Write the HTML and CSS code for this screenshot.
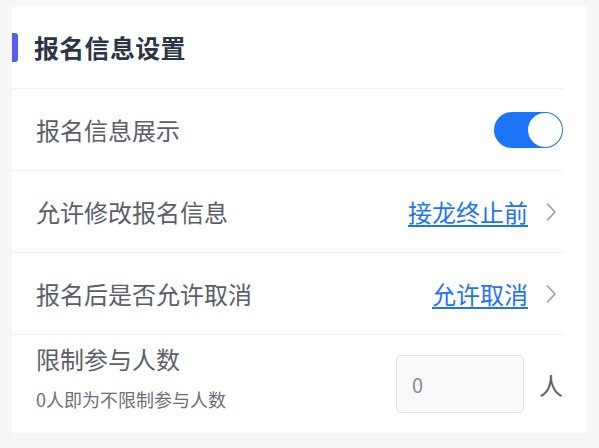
FILE: index.html
```html
<!DOCTYPE html>
<html lang="zh">
<head>
<meta charset="utf-8">
<link rel="stylesheet" href="styles.css">
</head>
<body>
<div class="card">
  <div class="header">
    <span class="bar"></span>
    <h2 class="title">报名信息设置</h2>
  </div>
  <div class="row">
    <span class="label">报名信息展示</span>
    <span class="switch"><span class="knob"></span></span>
  </div>
  <div class="row">
    <span class="label">允许修改报名信息</span>
    <span class="value"><a class="link">接龙终止前</a>
      <svg class="chev" width="12" height="20" viewBox="0 0 12 20"><path d="M2 1.5 L10 10 L2 18.5" fill="none" stroke="#9aa0ab" stroke-width="1.6"/></svg>
    </span>
  </div>
  <div class="row">
    <span class="label">报名后是否允许取消</span>
    <span class="value"><a class="link">允许取消</a>
      <svg class="chev" width="12" height="20" viewBox="0 0 12 20"><path d="M2 1.5 L10 10 L2 18.5" fill="none" stroke="#9aa0ab" stroke-width="1.6"/></svg>
    </span>
  </div>
  <div class="row last">
    <div class="labels">
      <span class="label">限制参与人数</span>
      <span class="hint">0人即为不限制参与人数</span>
    </div>
    <div class="value">
      <div class="input">0</div>
      <span class="unit">人</span>
    </div>
  </div>
</div>
</body>
</html>
```

FILE: styles.css
```css
* { box-sizing: border-box; }
body {
  margin: 0;
  background: #f7f7f7;
  font-family: "Noto Sans CJK SC", "Noto Sans", sans-serif;
}
.card {
  margin: 6px 12px 0 12px;
  width: 575px;
  height: 427px;
  background: #fff;
}
.header {
  position: relative;
  height: 83px;
  display: flex;
  align-items: center;
  padding-left: 22px;
  margin-right: 24px;
  border-bottom: 1px solid #f0f0f2;
}
.bar {
  position: absolute;
  left: 0;
  top: 27px;
  width: 6px;
  height: 29px;
  background: #5a5cf2;
  border-radius: 0 3px 3px 0;
}
.title {
  margin: 0;
  font-size: 25px;
  font-weight: 700;
  color: #2c3447;
  letter-spacing: 0.3px;
}
.row {
  height: 82px;
  margin-right: 24px;
  padding-left: 24px;
  display: flex;
  align-items: center;
  justify-content: space-between;
  border-bottom: 1px solid #f0f0f2;
}
.row.last {
  border-bottom: none;
  height: 98px;
  align-items: flex-start;
  padding-top: 6px;
}
.label {
  font-size: 24px;
  color: #5a5e69;
}
.labels {
  display: flex;
  flex-direction: column;
}
.hint {
  font-size: 18px;
  color: #6b6f7a;
  margin-top: 10px;
}
.value {
  display: flex;
  align-items: center;
}
.link {
  font-size: 24px;
  color: #1d74f5;
  text-decoration: underline;
  text-underline-offset: 3px;
}
.chev {
  margin-left: 17px;
  margin-right: 6px;
}
.switch {
  width: 69px;
  height: 36px;
  border-radius: 18px;
  background: #1b73f7;
  display: flex;
  align-items: center;
  justify-content: flex-end;
  padding: 1px;
}
.knob {
  width: 34px;
  height: 34px;
  border-radius: 50%;
  background: #fff;
}
.row.last .value {
  margin-top: 14px;
}
.input {
  width: 128px;
  height: 58px;
  background: #f8f9fb;
  border: 1px solid #e1e4e9;
  border-radius: 5px;
  padding-left: 15px;
  display: flex;
  align-items: center;
  font-size: 20px;
  color: #8a8a8a;
}
.unit {
  margin-left: 15px;
  font-size: 24px;
  color: #5a5e69;
}
```
